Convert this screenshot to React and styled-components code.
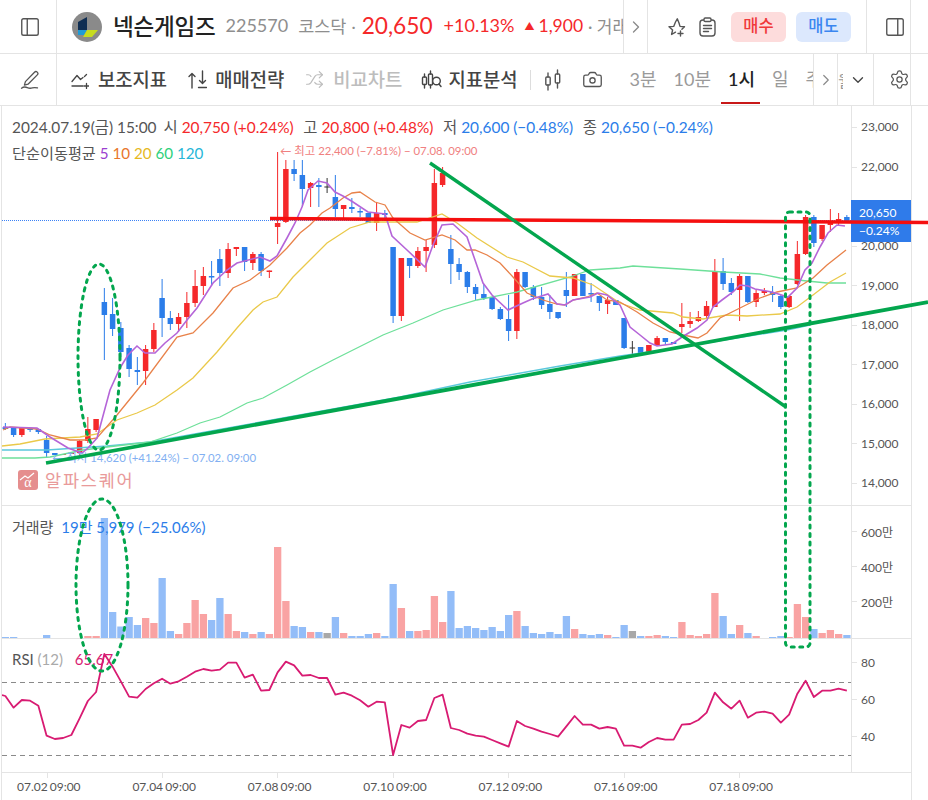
import React from 'react';
import styled, { createGlobalStyle } from 'styled-components';
import { ChevronDown, ChevronRight, Camera, Settings, PanelLeft, PanelRight, Shuffle } from 'lucide-react';

const FONT = `Lato, "Noto Sans CJK KR", sans-serif`;
const LINE = '#e4e4e4';
const RED = '#f5282a';
const BLUE = '#2b7de9';

const GlobalStyle = createGlobalStyle`
  html, body { margin: 0; padding: 0; background: #fff; }
  body { font-family: ${FONT}; color: #333; }
  * { box-sizing: border-box; }
`;

const Page = styled.div`
  position: relative;
  width: 928px;
  height: 800px;
  overflow: hidden;
  background: #fff;
`;

/* ---------- header ---------- */
const Header = styled.header`
  display: flex;
  height: 54px;
  border-bottom: 1px solid ${LINE};
  align-items: stretch;
`;

const Toolbar = styled(Header)`
  height: 52px;
`;

const SideCell = styled.div`
  flex: 0 0 57px;
  display: flex;
  align-items: center;
  justify-content: center;
  padding-left: 4px;
  border-right: 1px solid ${LINE};
  color: #555;
`;

const StockInfo = styled.div`
  flex: 0 0 566px;
  display: flex;
  align-items: center;
  padding: 0 0 3px 15px;
  overflow: hidden;
  white-space: nowrap;
`;

const Logo = styled.svg`
  flex: none;
  width: 30px;
  height: 30px;
  margin: 3px 11px 0 0;
`;

const StockName = styled.span`
  font-size: 22.5px;
  font-weight: 500;
  color: #222;
  margin-right: 10px;
  letter-spacing: -0.2px;
`;

const StockCode = styled.span`
  font-size: 18px;
  color: #8e8e8e;
  margin-right: 10px;
`;

const Market = styled.span`
  font-size: 17.5px;
  color: #8e8e8e;
  margin-right: 5px;
`;

const Sep = styled.span`
  font-size: 16px;
  color: #8e8e8e;
  margin-right: 6px;
`;

const Price = styled.span`
  font-size: 22.7px;
  color: ${RED};
  margin-right: 11px;
`;

const Change = styled.span`
  font-size: ${p => p.$size || 18}px;
  color: ${RED};
  margin-right: ${p => p.$gap || 10}px;
`;

const UpMark = styled.span`
  font-size: 10px;
  color: ${RED};
  margin-right: 4px;
`;

const Dimmed = styled.span`
  font-size: 17px;
  color: #8e8e8e;
`;

const MoreCell = styled.div`
  flex: 0 0 ${p => p.$w || 25}px;
  display: flex;
  align-items: center;
  justify-content: center;
  border-left: 1px solid ${LINE};
  border-right: 1px solid ${LINE};
  color: #8a8a8a;
`;

const Actions = styled.div`
  flex: 0 0 219px;
  display: flex;
  align-items: center;
  padding-left: 18px;
  border-right: 1px solid ${LINE};
  color: #444;
`;

const OrderButton = styled.div`
  width: 55px;
  height: 30px;
  border-radius: 6px;
  display: flex;
  align-items: center;
  justify-content: center;
  padding-bottom: 3px;
  font-size: 16.5px;
  font-weight: 500;
  background: ${p => (p.$sell ? '#dce8fd' : '#fddcdc')};
  color: ${p => (p.$sell ? '#3a86f0' : '#f0393a')};
  margin-left: ${p => (p.$sell ? 10 : 15)}px;
`;

const EdgeCell = styled.div`
  flex: 0 0 ${p => p.$w || 44}px;
  display: flex;
  align-items: center;
  justify-content: center;
  padding-left: ${p => p.$pad || 0}px;
  border-right: 1px solid ${LINE};
  color: #555;
`;

const ToolGroup = styled.div`
  flex: 0 0 756px;
  display: flex;
  align-items: center;
  padding-left: 14px;
  overflow: hidden;
  white-space: nowrap;
`;

const ToolButton = styled.div`
  display: flex;
  align-items: center;
  gap: ${p => p.$gap || 9}px;
  margin-right: ${p => p.$after || 21}px;
  font-size: 18.8px;
  font-weight: 500;
  color: ${p => (p.$off ? '#bdbdbd' : '#444')};
`;

const ToolLabel = styled.span`
  padding-bottom: 3px;
`;

const ToolDivider = styled.div`
  flex: none;
  width: 1px;
  height: 20px;
  background: #ddd;
  margin: 0 13px 0 -9px;
`;

const IconSlot = styled.div`
  flex: none;
  display: flex;
  margin-right: ${p => p.$gap}px;
  color: #555;
`;

const PeriodTab = styled.div`
  position: relative;
  flex: none;
  align-self: stretch;
  display: flex;
  align-items: center;
  padding-bottom: 3px;
  font-size: 18px;
  margin-right: 17px;
  color: ${p => (p.$active ? '#222' : '#9a9a9a')};
  font-weight: ${p => (p.$active ? 500 : 400)};
  &::after {
    content: '';
    display: ${p => (p.$active ? 'block' : 'none')};
    position: absolute;
    left: -7px;
    right: -5px;
    bottom: 1px;
    height: 2px;
    background: #c81818;
  }
`;

const CutCell = styled(EdgeCell)`
  flex: 0 0 36px;
  justify-content: flex-start;
  overflow: hidden;
  font-size: 16px;
  color: #9a9a9a;
  white-space: nowrap;
`;

const CutLabel = styled.span`
  flex: 0 0 5px;
  overflow: hidden;
  margin-right: 6px;
`;

const GearCell = styled(EdgeCell)`
  justify-content: flex-end;
`;

/* ---------- chart ---------- */
const ChartArea = styled.main`
  width: 911px;
  margin-left: 1px;
  border-left: 1px solid ${LINE};
  border-right: 1px solid ${LINE};
`;

const Pane = styled.section`
  display: flex;
  height: ${p => p.$h}px;
  border-bottom: ${p => (p.$flat ? 'none' : `1px solid ${LINE}`)};
`;

const Plot = styled.div`
  position: relative;
  flex: 0 0 849px;
`;

const PlotSvg = styled.svg`
  display: block;
  width: 849px;
  height: 100%;
`;

const Axis = styled.div`
  position: relative;
  flex: 0 0 59px;
  border-left: 1px solid ${LINE};
  padding-top: ${p => p.$top}px;
`;

const AxisLabel = styled.div`
  position: relative;
  height: ${p => p.$step}px;
  display: flex;
  align-items: center;
  padding-left: 9px;
  font-size: 12px;
  color: #555;
  &::before {
    content: '';
    position: absolute;
    left: 0;
    top: 50%;
    width: 5px;
    height: 1px;
    background: ${LINE};
  }
`;

const PriceTag = styled.div`
  position: absolute;
  left: -1px;
  top: 94px;
  width: 60px;
  height: 42px;
  background: #2f7bea;
  color: #fff;
  font-size: 12px;
  line-height: 18px;
  padding: 4px 0 0 8px;
`;

const Legend = styled.div`
  position: absolute;
  left: ${p => p.$left || 10}px;
  top: ${p => p.$top}px;
  font-size: ${p => p.$size || 15.4}px;
  color: #555;
  white-space: nowrap;
`;

const Tone = styled.span`
  color: ${p => p.$c};
  margin-left: ${p => p.$ml || 0}px;
`;

const PointNote = styled.div`
  position: absolute;
  left: ${p => p.$left}px;
  top: ${p => p.$top}px;
  font-size: 11.4px;
  color: ${p => p.$c};
  white-space: nowrap;
`;

const Watermark = styled.div`
  position: absolute;
  left: 16px;
  top: 361px;
  display: flex;
  align-items: center;
  gap: 7px;
  font-size: 17.5px;
  letter-spacing: 1.8px;
  color: #e99a9a;
`;

const WatermarkBadge = styled.div`
  position: relative;
  width: 20px;
  height: 20px;
  border-radius: 3px;
  background: #e58e8e;
  color: #fff;
  font-family: "Liberation Serif", serif;
  font-size: 14px;
  line-height: 25px;
  text-align: center;
  letter-spacing: 0;
`;

const BadgeMark = styled.svg`
  position: absolute;
  left: 0;
  top: 0;
`;

const TimeAxis = styled.div`
  display: flex;
  height: 28px;
  padding-left: 15px;
`;

const TimeLabel = styled.div`
  position: relative;
  flex: 0 0 115.4px;
  padding-top: 6px;
  font-size: 12px;
  word-spacing: -1px;
  color: #555;
  white-space: nowrap;
  &::before {
    content: '';
    position: absolute;
    left: 29.6px;
    top: 0;
    width: 1px;
    height: 5px;
    background: ${LINE};
  }
`;

const Overlay = styled.svg`
  position: absolute;
  inset: 0;
  width: 928px;
  height: 800px;
  pointer-events: none;
`;

/* chart data, in screen pixels read off the chart */
const barX = i => 46.6 + 8.25 * (i - 5);

// color, body top, body bottom, wick top, wick bottom
const CANDLES = [
  ['b',427,429,423,430],['b',428,435,428,437],['r',428,435,428,437],['b',428,430,428,432],['b',429,432,429,434],
  ['b',440,453,436,458],['b',453,455,453,455],['r',454,455,454,455],['r',452.5,454,452.5,454],['r',441,453,440,455],
  ['r',429,441,417,443],['r',419,430,419,432],['b',302,315,288,360],['b',314,329,298,336],['b',328,352,322,357],
  ['b',348,369,345,377],['b',370,372,357,385],['r',349,371,345,385],['r',330,349,323,352],['b',298,318,279,337],
  ['b',318,324,311,330],['r',317,324,313,332],['r',303,317,292,328],['r',286,303,270,307],['r',276,286,267,295],
  ['b',276,277.5,261,286],['b',259,273,249,286],['r',249,273,243,278],['r',247,249,247,256],['b',247,262,247,271],
  ['r',254,263,252,270],['b',254,271,252,276],['r',270.5,272,270.5,278],['r',223,227,152,244],['r',169,222,160,223],
  ['b',169,174,160,181],['b',175,189,160,207],['r',183,188,182,207],['b',185,187,178,207],['k',186.5,187.5,178,193],
  ['b',197,209,175,217],['r',205,209,205,218],['b',207,209,198,213],['b',211,212.5,208,217],['b',213,223,213,223],
  ['r',213,223,203,231],['b',213,215,210,218],['b',247,316,247,323],['r',258,316,258,321],['b',258,266,258,278],
  ['r',251,266,247,268],['r',247,251,240,272],['r',183,245,169,248],['r',173,185,167,187],['b',249,264,235,284],
  ['b',264,272,258,280],['b',272,287,271,293],['b',287,294,284,300],['b',294,298,284,300],['b',297,309,297,310],
  ['b',309,319,307,320],['b',319,331,295,341],['r',272,331,269,339],['b',272,287,272,288],['b',287,297,285,300],
  ['b',297,305,287,309],['b',304,312,295,319],['b',312,318,312,319],['b',290,296,272,307],['r',274,296,274,296],
  ['b',274,296,274,296],['b',293,294.5,283,302],['b',296,303,296,311],['r',300,304,297,314],['b',300,305,300,305],
  ['b',318,348,318,349],['k',347.5,348.5,341,355],['b',347,353,347,354],['r',345,352,345,352],['r',338,345,336,346],
  ['b',338,342,338,345],['b',342,344,342,344],['r',324,327,303,333],['r',321,324,312,328],['r',317,321,311,322],
  ['r',306,316,301,318],['r',271,307,259,307],['b',271,284,258,290],['b',283,292,278,295],['r',276,290,274,321],
  ['b',276,302,276,303],['r',293,302,289,307],['r',291,293,288,295],['b',292,295,286,302],['b',296,307,295,309],
  ['r',296,307,296,308],['r',254,284,241,285],['r',217,254,215,255],['b',217,243,215,247],['r',225,239,225,241],
  ['r',221,225,209,232],['r',219,222,213,226],['b',217,222,215,222],
];

const VOLUME = [
  ['b',1],['b',1],['b',0],['b',0],['b',0],['b',3],['b',0],['r',0],['r',0],['r',0],['r',2],['r',2],['b',120],
  ['b',26],['b',11.5],['b',21],['b',13],['r',20],['r',15],['b',60],['b',7],['r',4],['r',15],['r',38],['r',24],
  ['b',18],['b',40],['r',24],['r',7],['b',6],['r',4],['b',6],['r',4],['r',91],['r',37],['b',12],['b',11],['r',6],
  ['b',6],['k',5],['b',21],['r',5],['b',2],['b',2],['b',4],['r',5],['b',2],['b',54],['r',30],['b',7],['r',7],
  ['r',8],['r',42],['r',16],['b',47],['b',10],['b',12],['b',10],['b',8],['b',11],['b',7],['b',23],['r',27],
  ['b',12],['b',5],['b',4],['b',6],['b',4],['b',22],['r',9],['b',4],['b',3],['b',4],['r',3],['b',1],['b',13],
  ['k',7],['b',2],['r',2],['r',3],['b',2],['b',1],['r',16],['r',3],['r',2],['r',4],['r',45],['b',22],['b',4],
  ['r',13],['b',5],['r',2],['b',0],['b',1],['b',2],['r',1],['r',34],['r',21],['b',9],['r',5],['r',8],['r',4],['b',3],
];

const RSI = [
  168,203,180,182,197,287,297,294,285,235,183,156,42,80,124,170,173,147,130,116,131,124,110,95,87,92,89,68,68,113,
  104,152,150,97,65,76,107,105,114,114,164,158,167,181,200,185,187,345,255,263,243,240,174,164,264,270,281,287,290,
  300,310,320,243,258,266,275,282,290,259,228,254,254,266,261,266,317,317,323,306,294,299,299,254,252,240,218,158,
  187,206,182,233,218,215,221,248,224,161,122,171,152,152,146,152,
].map(v => 640 + v / 3);

const MA5 = '3,427 37,428 50,437 68,448 82,453 88,448 97,438 110,390 120,368 128,355 137,346 145,353 155,353 165,343 177,333 187,320 197,308 213,283 227,270 237,263 260,257 270,261 277,256 287,238 295,223 302,207 308,190 318,181 327,183 335,192 343,196 353,202 368,212 385,214 392,236 407,250 425,267 433,245 442,225 453,224 467,237 483,283 492,295 508,310 523,303 532,299 548,294 557,304 565,305 573,300 590,297 598,293 607,295 620,305 630,327 640,335 650,343 657,346 672,344 682,337 697,328 707,320 713,307 722,300 733,292 740,285 748,286 755,289 772,292 788,297 797,288 805,270 812,263 820,247 828,233 837,225 845,226';
const MA10 = '3,430 10,427 37,429 50,435 70,440 85,440 97,438 117,415 143,383 177,337 193,333 213,313 233,288 250,280 270,265 287,248 300,233 310,225 322,213 330,208 343,198 352,193 360,192 375,202 385,205 393,218 410,233 425,240 442,235 455,240 467,250 475,250 487,255 500,263 513,277 527,293 543,300 557,304 565,305 573,300 587,297 597,293 607,300 620,302 637,312 653,323 670,332 683,335 698,338 707,333 720,318 740,308 760,298 777,292 797,288 813,278 827,265 846,250';
const MA20 = '2,446 20,444 45,439 80,437 97,434 117,420 137,413 155,405 177,390 193,378 217,352 237,328 253,310 263,302 277,297 293,277 310,260 327,243 350,228 370,222 397,222 417,222 442,214 457,223 477,238 507,257 523,262 550,276 573,278 593,285 620,303 640,310 673,313 683,317 703,319 727,315 747,316 780,314 797,307 813,295 830,282 846,273';
const MA60 = '2,458 35,458 50,457 83,450 107,447 150,442 177,433 200,423 220,417 247,403 263,398 287,385 310,372 333,360 383,335 413,323 443,310 477,300 517,292 570,277 590,270 620,268 633,266 680,269 723,272 760,274 780,278 807,281 827,283 846,283';
const MA120 = '2,450 47,450 107,446 150,442 283,418 400,397 470,382 560,366 620,356 663,350 787,330 810,325';

const CANDLE_COLOR = { r: RED, b: BLUE, k: '#333' };
const VOLUME_COLOR = { r: '#f9a3a3', b: '#93bdf8', k: '#a8a8a8' };

// the slot for 21,000 sits under the current price tag
const PRICE_TICKS = ['23,000', '22,000', '', '20,000', '19,000', '18,000', '17,000', '16,000', '15,000', '14,000'];
const TIME_TICKS = ['07.02 09:00', '07.04 09:00', '07.08 09:00', '07.10 09:00', '07.12 09:00', '07.16 09:00', '07.18 09:00'];

const PriceChart = () => (
  <PlotSvg viewBox="2 106 849 399">
    <line x1="2" x2="851" y1="220.5" y2="220.5" stroke="#3b82f6" strokeDasharray="1 1" />
    {CANDLES.map(([c, top, bottom, wt, wb], i) => (
      <g key={i} fill={CANDLE_COLOR[c]} stroke={CANDLE_COLOR[c]}>
        <line x1={barX(i)} x2={barX(i)} y1={wt} y2={wb} />
        <rect x={barX(i) - 2.75} y={top} width="5.5" height={bottom - top} stroke="none" />
      </g>
    ))}
    <g fill="none" strokeWidth="1.3">
      <polyline points={MA120} stroke="#5bc8dc" />
      <polyline points={MA60} stroke="#6ee09a" />
      <polyline points={MA20} stroke="#eac94a" />
      <polyline points={MA10} stroke="#e8824a" />
      <polyline points={MA5} stroke="#b565d8" strokeWidth="1.6" />
    </g>
  </PlotSvg>
);

const VolumeChart = () => (
  <PlotSvg viewBox="2 506 849 132">
    {VOLUME.map(([c, h], i) => (
      <rect key={i} x={barX(i) - 3.6} y={638 - h} width="7.3" height={h} fill={VOLUME_COLOR[c]} />
    ))}
  </PlotSvg>
);

const RsiChart = () => (
  <PlotSvg viewBox="2 639 849 133">
    <line x1="2" x2="851" y1="682.5" y2="682.5" stroke="#8a8a8a" strokeDasharray="5 4" />
    <line x1="2" x2="851" y1="755.5" y2="755.5" stroke="#8a8a8a" strokeDasharray="5 4" />
    <polyline
      fill="none"
      stroke="#d81b72"
      strokeWidth="1.8"
      strokeLinejoin="round"
      points={`2,695 ${RSI.map((y, i) => `${barX(i)},${y}`).join(' ')}`}
    />
  </PlotSvg>
);

const PenIcon = () => (
  <svg width="20" height="20" viewBox="0 0 20 20" fill="none" stroke="currentColor" strokeWidth="1.3" strokeLinejoin="round" strokeLinecap="round">
    <path d="M14.5 2.2a1.9 1.9 0 0 1 2.8 2.7L8 14.2l-3.6 1 1-3.6z" />
    <path d="M1.5 18.2c2-1.5 3.800-1.500 5.800-.6s3.200.9 5 .3 3-.5 5.200 0" />
  </svg>
);

const IndicatorIcon = () => (
  <svg width="18" height="18" viewBox="0 0 18 18" fill="none" stroke="currentColor" strokeWidth="1.3" strokeLinecap="round" strokeLinejoin="round">
    <path d="M1 10.500 6 4.500l3.500 4L12 6.500" />
    <path d="M13.500 5.500l2-2" />
    <path d="M1 15h11" />
    <path d="M15.500 12.500v5M13 15h5" />
  </svg>
);

const StrategyIcon = () => (
  <svg width="19" height="19" viewBox="0 0 19 19" fill="none" stroke="currentColor" strokeWidth="1.4" strokeLinecap="round" strokeLinejoin="round">
    <path d="M4 18V3.500M1 6.500l3-3 3 3" />
    <path d="M14.500 1v12M11.500 10.500l3 3 3-3" />
    <path d="M10.500 17.500h8" />
  </svg>
);

const AnalysisIcon = () => (
  <svg width="21" height="20" viewBox="0 0 21 20" fill="none" stroke="currentColor" strokeWidth="1.4" strokeLinecap="round">
    <path d="M3.500 4v3M3.500 14.500V18M9.500 1v3M9.500 15v3" />
    <rect x="1.500" y="7" width="4" height="7.500" rx="1" />
    <rect x="7.500" y="4" width="4" height="11" rx="1" />
    <circle cx="15.500" cy="11" r="3.800" fill="#fff" />
    <path d="M18 14l2 2.500" />
  </svg>
);

const CandleIcon = () => (
  <svg width="18" height="22" viewBox="0 0 18 22" fill="none" stroke="currentColor" strokeWidth="1.4" strokeLinecap="round">
    <path d="M4 4v4M4 16v5M13.500 1v4M13.500 14v5" />
    <rect x="1.800" y="8" width="4.400" height="8" rx="1" />
    <rect x="11.300" y="5" width="4.400" height="9" rx="1" />
  </svg>
);

const StarPlusIcon = () => (
  <svg width="20" height="20" viewBox="0 0 20 20" fill="none" stroke="currentColor" strokeWidth="1.4" strokeLinecap="round" strokeLinejoin="round">
    <path d="M9.500 15.200l-3.900 2.300 1-4.500L3 9.800l4.700-.4L9.500 5l0 0 1.800-3.200L13 6l1 3.400 4.500.4-2.600 2.400" />
    <path d="M14.500 14v5M12 16.500h5" />
  </svg>
);

const ClipboardIcon = () => (
  <svg width="17" height="20" viewBox="0 0 17 20" fill="none" stroke="currentColor" strokeWidth="1.4" strokeLinecap="round">
    <rect x="1" y="3" width="15" height="16" rx="3" />
    <rect x="5" y="1" width="7" height="3.500" rx="1.200" fill="#fff" />
    <path d="M4.500 8.500h8M4.500 11.500h8M4.500 14.500h5" />
  </svg>
);

const App = () => (
  <Page>
    <GlobalStyle />
    <Header>
      <SideCell><PanelLeft size={22} strokeWidth={1.5} /></SideCell>
      <StockInfo>
        <Logo viewBox="0 0 30 30">
          <circle cx="15" cy="15" r="15" fill="#8a8a8a" />
          <path d="M6 10 15 5v13H6z" fill="#0f2d52" />
          <path d="M6 18h9l-3 5H6z" fill="#1f9bd6" />
          <path d="M15 18h11l-6 7H11z" fill="#c7dc1e" />
        </Logo>
        <StockName>넥슨게임즈</StockName>
        <StockCode>225570</StockCode>
        <Market>코스닥</Market>
        <Sep>·</Sep>
        <Price>20,650</Price>
        <Change>+10.13%</Change>
        <UpMark>▲</UpMark>
        <Change $size={17.5} $gap={5}>1,900</Change>
        <Dimmed>· 거래량</Dimmed>
      </StockInfo>
      <MoreCell><ChevronRight size={20} strokeWidth={1.6} /></MoreCell>
      <Actions>
        <IconSlot $gap={13}><StarPlusIcon /></IconSlot>
        <IconSlot $gap={0}><ClipboardIcon /></IconSlot>
        <OrderButton>매수</OrderButton>
        <OrderButton $sell>매도</OrderButton>
      </Actions>
      <EdgeCell $pad={12}><PanelRight size={22} strokeWidth={1.5} /></EdgeCell>
    </Header>

    <Toolbar>
      <SideCell><PenIcon /></SideCell>
      <ToolGroup>
        <ToolButton><IndicatorIcon /><ToolLabel>보조지표</ToolLabel></ToolButton>
        <ToolButton $gap={8}><StrategyIcon /><ToolLabel>매매전략</ToolLabel></ToolButton>
        <ToolButton $off $after={19}><Shuffle size={19} strokeWidth={1.5} /><ToolLabel>비교차트</ToolLabel></ToolButton>
        <ToolButton $gap={6}><AnalysisIcon /><ToolLabel>지표분석</ToolLabel></ToolButton>
        <ToolDivider />
        <IconSlot $gap={20}><CandleIcon /></IconSlot>
        <IconSlot $gap={27}><Camera size={21} strokeWidth={1.5} /></IconSlot>
        <PeriodTab>3분</PeriodTab>
        <PeriodTab>10분</PeriodTab>
        <PeriodTab $active>1시</PeriodTab>
        <PeriodTab>일</PeriodTab>
        <PeriodTab>주</PeriodTab>
      </ToolGroup>
      <MoreCell><ChevronRight size={18} strokeWidth={1.6} /></MoreCell>
      <CutCell>
        <CutLabel>월</CutLabel>
        <ChevronDown size={18} strokeWidth={1.8} color="#444" style={{ flex: 'none' }} />
      </CutCell>
      <GearCell $w={37}><Settings size={21} strokeWidth={1.4} /></GearCell>
    </Toolbar>

    <ChartArea>
      <Pane $h={400}>
        <Plot>
          <PriceChart />
          <Legend $top={9}>
            2024.07.19(금) 15:00 <Tone $ml={3}>시</Tone> <Tone $c={RED}>20,750 (+0.24%)</Tone>
            <Tone $ml={9.7}>고</Tone> <Tone $c={RED}>20,800 (+0.48%)</Tone>
            <Tone $ml={9.7}>저</Tone> <Tone $c={BLUE}>20,600 (−0.48%)</Tone>
            <Tone $ml={9.7}>종</Tone> <Tone $c={BLUE}>20,650 (−0.24%)</Tone>
          </Legend>
          <Legend $top={35} $size={15.2}>
            단순이동평균 <Tone $c="#9b3fd0">5</Tone> <Tone $c="#e8762c">10</Tone> <Tone $c="#e6b91e">20</Tone>{' '}
            <Tone $c="#2fd07c">60</Tone> <Tone $c="#27b6d8">120</Tone>
          </Legend>
          <PointNote $left={278} $top={36} $c="#f08080">← 최고 22,400 (−7.81%) − 07.08. 09:00</PointNote>
          <PointNote $left={50} $top={343} $c="#82b0f2">← 최저 14,620 (+41.24%) − 07.02. 09:00</PointNote>
          <Watermark>
            <WatermarkBadge>
              α
              <BadgeMark width="20" height="20" viewBox="0 0 20 20">
                <path d="M2 10l5-4 3 2 6-5" fill="none" stroke="#fff" strokeWidth="1.2" />
              </BadgeMark>
            </WatermarkBadge>
            알파스퀘어
          </Watermark>
        </Plot>
        <Axis $top={1.2}>
          {PRICE_TICKS.map((t, i) => <AxisLabel key={i} $step={39.55}>{t}</AxisLabel>)}
          <PriceTag>20,650<br />−0.24%</PriceTag>
        </Axis>
      </Pane>

      <Pane $h={133}>
        <Plot>
          <VolumeChart />
          <Legend $top={10} $size={15}>
            거래량 <Tone $ml={4} $c={BLUE}>19만 5,979 (−25.06%)</Tone>
          </Legend>
        </Plot>
        <Axis $top={7.5}>
          {['600만', '400만', '200만'].map(t => <AxisLabel key={t} $step={35}>{t}</AxisLabel>)}
        </Axis>
      </Pane>

      <Pane $h={134}>
        <Plot>
          <RsiChart />
          <Legend $top={11} $size={15}>
            RSI <Tone $c="#aaa">(12)</Tone> <Tone $ml={8} $c="#d81b72">65.67</Tone>
          </Legend>
        </Plot>
        <Axis $top={4.5}>
          {['80', '60', '40'].map(t => <AxisLabel key={t} $step={37}>{t}</AxisLabel>)}
        </Axis>
      </Pane>

      <TimeAxis>
        {TIME_TICKS.map(t => <TimeLabel key={t}>{t}</TimeLabel>)}
      </TimeAxis>
    </ChartArea>

    {/* hand drawn marks on top of everything */}
    <Overlay viewBox="0 0 928 800">
      <line x1="270" y1="218.5" x2="928" y2="222.5" stroke="#f50f0f" strokeWidth="3.5" />
      <g fill="none" stroke="#03a64e">
        <line x1="46" y1="463" x2="928" y2="302" strokeWidth="3.8" />
        <line x1="430" y1="163" x2="786" y2="407" strokeWidth="3.4" />
        <g strokeWidth="3" strokeDasharray="3 5.500" strokeLinecap="round">
          <ellipse cx="99" cy="357" rx="21" ry="93" />
          <ellipse cx="102" cy="585" rx="26" ry="86" />
          <rect x="785.500" y="212" width="24.500" height="435" rx="4" />
        </g>
      </g>
    </Overlay>
  </Page>
);

export default App;
